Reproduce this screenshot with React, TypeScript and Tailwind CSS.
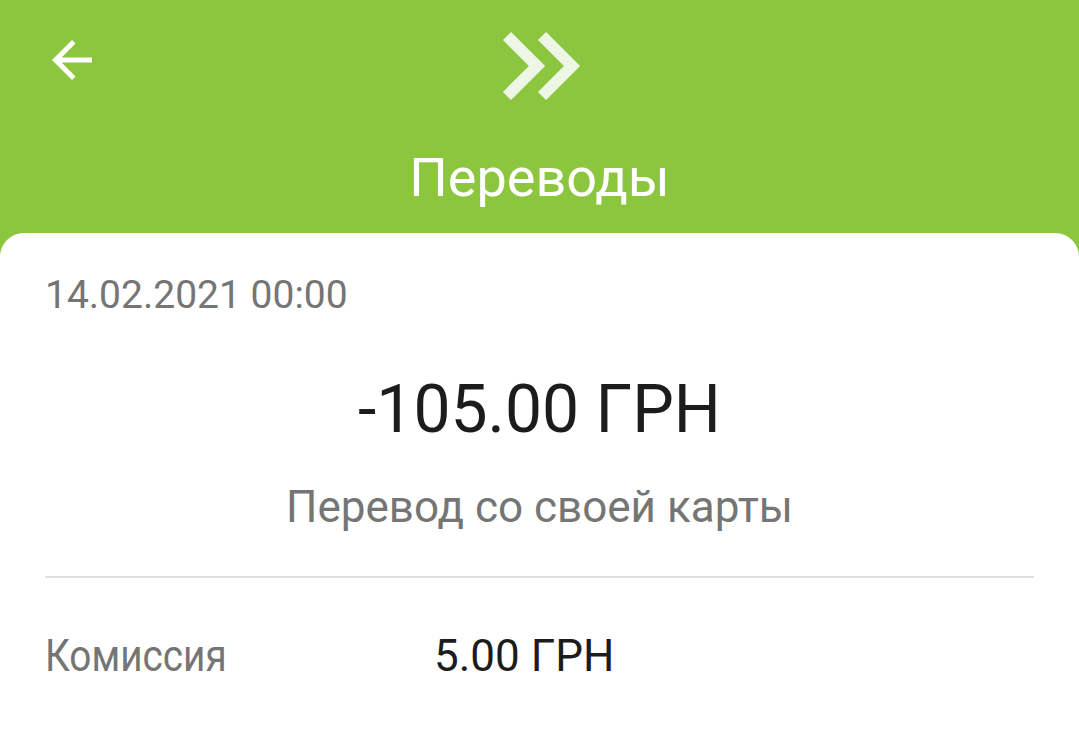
export default function App() {
  return (
    <div
      className="min-h-screen h-[735px] bg-[#8cc63f] flex flex-col overflow-hidden"
      style={{ fontFamily: "Roboto, 'Noto Sans', sans-serif" }}
    >
      {/* Header */}
      <div className="h-[233px] shrink-0 flex flex-col">
        <div className="grid grid-cols-[1fr_auto_1fr] items-start pt-[30px] h-[102px]">
          <div className="pl-[42px]">
            <svg width="60" height="60" viewBox="0 0 24 24" fill="#ffffff">
              <path d="M20 11H7.83l5.59-5.59L12 4l-8 8 8 8 1.41-1.41L7.83 13H20v-2z" />
            </svg>
          </div>
          <svg width="82" height="72" viewBox="0 0 82 72" fill="none">
            <path
              d="M8 6 L38 36 L8 66 M43 6 L73 36 L43 66"
              stroke="#eef6e6"
              strokeWidth="11.5"
              strokeLinecap="butt"
              strokeLinejoin="miter"
            />
          </svg>
          <div />
        </div>
        <div className="text-center text-white text-[54px] leading-[60px] mt-[46px]">Переводы</div>
      </div>

      {/* Card */}
      <div className="flex-1 bg-white rounded-t-[24px] px-[45px]">
        <div className="pt-[40px] text-[39px] leading-[44px] text-[#757575]">14.02.2021 00:00</div>
        <div className="mt-[55px] text-center text-[66px] leading-[76px] text-[#1c1c1c]">-105.00 ГРН</div>
        <div className="mt-[37px] text-center text-[44px] leading-[44px] text-[#757575]">Перевод со своей карты</div>
        <div className="mt-[47px] h-[2px] bg-[#e0e0e0]" />
        <div className="mt-[56px] flex items-center text-[44px] leading-[44px]">
          <div className="w-[389px] text-[#757575]">
            <span className="inline-block origin-left scale-x-[0.88]">Комиссия</span>
          </div>
          <div className="text-[#1c1c1c]">5.00 ГРН</div>
        </div>
      </div>
    </div>
  );
}
